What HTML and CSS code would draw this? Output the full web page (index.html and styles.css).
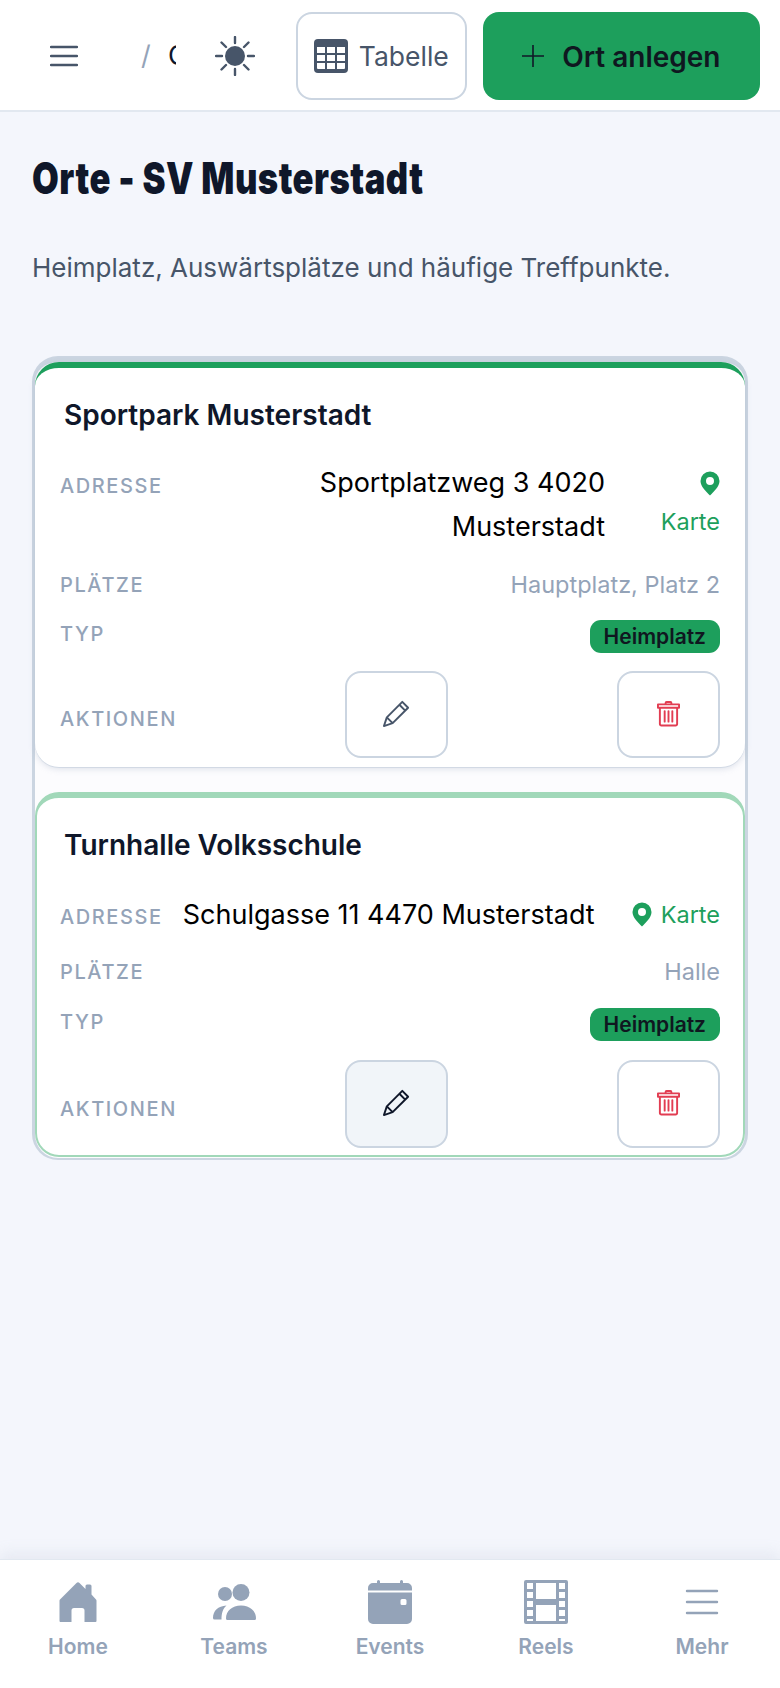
FILE: index.html
```html
<!DOCTYPE html>
<html lang="de">
<head>
<meta charset="utf-8">
<title>Orte - SV Musterstadt</title>
<link rel="stylesheet" href="styles.css">
</head>
<body>
<header class="topbar">
  <button class="menu-btn" aria-label="Menü">
    <svg class="menu-icon" viewBox="0 0 28 22"><path d="M1 2h26M1 11h26M1 20h26"/></svg>
  </button>
  <div class="crumbs"><span class="slash">/</span><span class="crumb-clip"><span class="crumb">Orte</span></span></div>
  <button class="theme-btn" aria-label="Design">
    <svg class="sun" viewBox="0 0 40 40"><circle cx="20" cy="20" r="10"/><path d="M20 1v6M20 33v6M1 20h6M33 20h6M6.500 6.500l4.500 4.500M29 29l4.500 4.500M6.500 33.500l4.500-4.500M29 11l4.500-4.500"/></svg>
  </button>
  <button class="table-btn">
    <svg class="table-icon" viewBox="0 0 34 34"><path class="tfill" d="M4 0h26a4 4 0 0 1 4 4v26a4 4 0 0 1-4 4H4a4 4 0 0 1-4-4V4a4 4 0 0 1 4-4z"/><path class="tcell" d="M3 8h8v6H3zM13 8h8v6h-8zM23 8h8v6h-8zM3 16h8v6H3zM13 16h8v6h-8zM23 16h8v6h-8zM3 24h8v6H4a1 1 0 0 1-1-1zM13 24h8v6h-8zM23 24h8v5a1 1 0 0 1-1 1h-7z"/></svg>
    <span>Tabelle</span>
  </button>
  <button class="add-btn">
    <svg class="plus" viewBox="0 0 22 22"><path d="M11 0v22M0 11h22"/></svg>
    <span>Ort anlegen</span>
  </button>
</header>

<main class="page">
  <h1 class="title">Orte - SV Musterstadt</h1>
  <p class="subtitle">Heimplatz, Auswärtsplätze und häufige Treffpunkte.</p>

  <section class="list">
    <article class="card card-first">
      <h2 class="card-title">Sportpark Musterstadt</h2>
      <div class="row row-address">
        <span class="label">Adresse</span>
        <span class="address address-wrap">Sportplatzweg 3 4020 Musterstadt</span>
        <a class="map map-stack">
          <svg class="pin" viewBox="0 0 20 24"><path fill-rule="evenodd" d="M10 0a9.500 9.500 0 0 1 9.500 9.500c0 5.500-5.500 10.500-9.500 14.500C6 20 .5 15 .5 9.500A9.500 9.500 0 0 1 10 0zm0 5.500a4 4 0 1 0 0 8 4 4 0 0 0 0-8z"/></svg>
          <span>Karte</span>
        </a>
      </div>
      <div class="row row-places"><span class="label">Plätze</span><span class="places">Hauptplatz, Platz 2</span></div>
      <div class="row row-type"><span class="label">Typ</span><span class="badge">Heimplatz</span></div>
      <div class="row row-actions">
        <span class="label">Aktionen</span>
        <button class="icon-btn edit-btn" aria-label="Bearbeiten">
          <svg class="pencil" viewBox="0 0 30 30"><path d="M2 28l3-9L21 3l6 6-16 16zM5 19l6 6M18 6l6 6"/></svg>
        </button>
        <button class="icon-btn" aria-label="Löschen">
          <svg class="trash" viewBox="0 0 24 28"><path d="M1 4.500h22v3.500H1zM9 4.500V3a1 1 0 0 1 1-1h4a1 1 0 0 1 1 1v1.500M3 8v17a1.500 1.500 0 0 0 1.500 1.500h15A1.500 1.500 0 0 0 21 25V8M8 11.500v11M12 11.500v11M16 11.500v11"/></svg>
        </button>
      </div>
    </article>

    <article class="card card-second">
      <h2 class="card-title">Turnhalle Volksschule</h2>
      <div class="row row-address row-address-line">
        <span class="label">Adresse</span>
        <span class="address">Schulgasse 11 4470 Musterstadt</span>
        <a class="map">
          <svg class="pin" viewBox="0 0 20 24"><path fill-rule="evenodd" d="M10 0a9.500 9.500 0 0 1 9.500 9.500c0 5.500-5.500 10.500-9.500 14.500C6 20 .5 15 .5 9.500A9.500 9.500 0 0 1 10 0zm0 5.500a4 4 0 1 0 0 8 4 4 0 0 0 0-8z"/></svg>
          <span>Karte</span>
        </a>
      </div>
      <div class="row row-places"><span class="label">Plätze</span><span class="places">Halle</span></div>
      <div class="row row-type"><span class="label">Typ</span><span class="badge">Heimplatz</span></div>
      <div class="row row-actions">
        <span class="label">Aktionen</span>
        <button class="icon-btn edit-btn is-hover" aria-label="Bearbeiten">
          <svg class="pencil" viewBox="0 0 30 30"><path d="M2 28l3-9L21 3l6 6-16 16zM5 19l6 6M18 6l6 6"/></svg>
        </button>
        <button class="icon-btn" aria-label="Löschen">
          <svg class="trash" viewBox="0 0 24 28"><path d="M1 4.500h22v3.500H1zM9 4.500V3a1 1 0 0 1 1-1h4a1 1 0 0 1 1 1v1.500M3 8v17a1.500 1.500 0 0 0 1.500 1.500h15A1.500 1.500 0 0 0 21 25V8M8 11.500v11M12 11.500v11M16 11.500v11"/></svg>
        </button>
      </div>
    </article>
  </section>
</main>

<nav class="bottom-nav">
  <a class="nav-item">
    <svg class="nav-icon" viewBox="0 0 44 44"><path d="M20.500 3L4 19.500a2 2 0 0 0-.5 1.300V41a1 1 0 0 0 1 1h11V30.500a2.500 2.500 0 0 1 2.500-2.500h8a2.500 2.500 0 0 1 2.500 2.500V42h11a1 1 0 0 0 1-1V20.800a2 2 0 0 0-.5-1.300L35.500 14.500V6a1.500 1.500 0 0 0-1.500-1.500h-3A1.500 1.500 0 0 0 29.500 6v3L23.500 3a2 2 0 0 0-3 0z"/></svg>
    <span>Home</span>
  </a>
  <a class="nav-item">
    <svg class="nav-icon" viewBox="0 0 44 44"><circle cx="13" cy="14" r="7"/><circle cx="29" cy="12.500" r="8.500"/><path d="M1 38c0-7 5-12 13.500-12.500C11 28.500 9.500 33 9.500 39.500H2.500A1.500 1.500 0 0 1 1 38zM14 38.500C14 31 20 25.500 29 25.500S44 31 44 38.500a1.500 1.500 0 0 1-1.500 1.500h-27a1.500 1.500 0 0 1-1.500-1.500z"/></svg>
    <span>Teams</span>
  </a>
  <a class="nav-item">
    <svg class="nav-icon" viewBox="0 0 44 44"><path fill-rule="evenodd" d="M9 1.500a1.500 1.500 0 0 1 3 0V3h20V1.500a1.500 1.500 0 0 1 3 0V3h4a5 5 0 0 1 5 5v2.500H0V8a5 5 0 0 1 5-5h4zM0 12.500h44V39a5 5 0 0 1-5 5H5a5 5 0 0 1-5-5zM34 19a1.500 1.500 0 0 0-1.500 1.500v3A1.500 1.500 0 0 0 34 25h3a1.500 1.500 0 0 0 1.500-1.500v-3A1.500 1.500 0 0 0 37 19z"/></svg>
    <span>Events</span>
  </a>
  <a class="nav-item">
    <svg class="nav-icon" viewBox="0 0 44 44"><path fill-rule="evenodd" d="M2 0h40a2 2 0 0 1 2 2v40a2 2 0 0 1-2 2H2a2 2 0 0 1-2-2V2a2 2 0 0 1 2-2zm1 3v6h6V3zm0 9v6h6v-6zm0 9v6h6v-6zm0 9v6h6v-6zm0 9v2h6v-2zM12 3v16h20V3zm23 0v6h6V3zm0 9v6h6v-6zm0 9v6h6v-6zm0 9v6h6v-6zm0 9v2h6v-2zM12 25v16h20V25z"/></svg>
    <span>Reels</span>
  </a>
  <a class="nav-item">
    <svg class="nav-icon nav-lines" viewBox="0 0 44 44"><path d="M7 11h30M7 22h30M7 33h30"/></svg>
    <span>Mehr</span>
  </a>
</nav>
</body>
</html>
```

FILE: styles.css
```css
* { box-sizing: border-box; }
html, body { margin: 0; height: 100%; }
body {
  display: flex;
  flex-direction: column;
  height: 1688px;
  overflow: hidden;
  background: #f4f6fc;
  color: #0f172a;
  font-family: "Inter", "Noto Sans", sans-serif;
}
button { font: inherit; background: none; border: 0; padding: 0; color: inherit; }

.topbar {
  flex: none;
  height: 112px;
  display: flex;
  align-items: center;
  background: #fff;
  border-bottom: 2px solid #e2e8f0;
  padding: 1px 20px 0 50px;
}
.menu-btn { width: 28px; height: 22px; display: flex; }
.menu-icon { width: 28px; height: 22px; fill: none; stroke: #475569; stroke-width: 2.4; stroke-linecap: round; }
.crumbs { display: flex; align-items: center; margin-left: 63px; width: 35px; font-size: 27px; }
.slash { color: #94a3b8; width: 27px; }
.crumb-clip { width: 8px; overflow: hidden; display: block; }
.crumb { color: #0f172a; }
.theme-btn { width: 40px; height: 40px; margin-left: 39px; display: flex; }
.sun { width: 40px; height: 40px; }
.sun circle { fill: #475569; }
.sun path { fill: none; stroke: #475569; stroke-width: 2.4; stroke-linecap: round; }
.table-btn {
  margin-left: 41px;
  width: 171px;
  height: 88px;
  display: flex;
  align-items: center;
  justify-content: center;
  gap: 11px;
  border: 2px solid #cbd5e1;
  border-radius: 16px;
  color: #475569;
  font-size: 26.500px;
  white-space: nowrap;
}
.table-icon { width: 34px; height: 34px; flex: none; }
.tfill { fill: #475569; }
.tcell { fill: #fff; }
.add-btn {
  margin-left: 16px;
  width: 278px;
  height: 88px;
  display: flex;
  align-items: center;
  justify-content: center;
  gap: 18px;
  background: #1d9f5c;
  border-radius: 16px;
  color: #0f1720;
  font-size: 28px;
  font-weight: 600;
  white-space: nowrap;
}
.add-btn span { margin-top: 2px; }
.plus { width: 22px; height: 22px; fill: none; stroke: #111827; stroke-width: 1.6; }

.page { flex: 1; padding: 0 32px; min-height: 0; }
.title {
  margin: 40px 0 0;
  height: 52px;
  font-weight: 900;
  font-size: 44px;
  line-height: 52px;
  color: #0f172a;
  white-space: nowrap;
  transform: scaleX(.786);
  transform-origin: left center;
  letter-spacing: .6px;
}
.subtitle {
  margin: 46px 0 0;
  font-size: 26px;
  line-height: 36px;
  color: #475569;
}

.list {
  margin-top: 70px;
  height: 804px;
  border: solid #cbd5e1;
  border-width: 6px 3px 2px;
  border-radius: 26px;
  display: flex;
  flex-direction: column;
  gap: 25px;
  background: #fcfcfe;
}
.card { background: #fff; border-radius: 24px; padding: 0 25px; flex: none; }
.card-first {
  height: 405px;
  border-top: 6px solid #1d9f5c;
  box-shadow: 0 2px 6px rgba(148,163,184,.3), 0 1px 0 #e2e8f0;
}
.card-second { height: 365px; border: 2px solid #a1d8b9; border-top-width: 6px; padding: 0 23px; }

.card-title {
  margin: 0;
  padding: 28px 0 0 4px;
  font-size: 28px;
  line-height: 38px;
  font-weight: 600;
  color: #0f172a;
}
.row { display: flex; justify-content: space-between; align-items: center; }
.label {
  color: #94a3b8;
  font-size: 20px;
  font-weight: 500;
  letter-spacing: 1.6px;
  text-transform: uppercase;
  flex: none;
}
.row-address { margin-top: 29px; align-items: flex-start; }
.row-address .label { margin-top: 11px; }
.address { color: #000; font-size: 27px; line-height: 44px; text-align: right; margin-top: -2px; }
.address-wrap { width: 300px; margin-left: auto; }
.map { display: flex; align-items: center; gap: 9px; color: #1d9f5c; font-size: 23.500px; }
.pin { width: 20px; height: 25px; fill: #1d9f5c; flex: none; }
.map-stack {
  flex-direction: column;
  align-items: flex-end;
  gap: 11px;
  margin-left: 57px;
  padding-top: 8px;
  width: 58px;
}
.row-address-line { margin-top: 29px; align-items: center; gap: 20px; }
.row-address-line .label { margin-top: 4px; }
.row-address-line .address { flex: 1; text-align: left; white-space: nowrap; margin-top: 0; line-height: 43px; }
.row-address-line .map { flex: none; }

.row-places { margin-top: 18px; }
.places { color: #94a3b8; font-size: 23.500px; line-height: 36px; }
.row-type { margin-top: 17px; }
.card-second .row-type { margin-top: 18px; }
.row-type .label { margin-bottom: 5px; }
.badge {
  background: #1d9f5c;
  color: #0f1720;
  font-size: 21px;
  font-weight: 600;
  line-height: 33px;
  height: 33px;
  padding: 0 14px;
  border-radius: 11px;
}
.row-actions { margin-top: 18px; justify-content: flex-start; }
.card-second .row-actions { margin-top: 19px; }
.row-actions .label { margin-right: 168px; margin-top: 9px; }
.icon-btn {
  width: 103px;
  height: 87px;
  border: 2px solid #cbd5e1;
  border-radius: 16px;
  background: #fff;
  display: flex;
  align-items: center;
  justify-content: center;
  flex: none;
  padding-bottom: 3px;
}
.card-second .icon-btn { height: 88px; }
.icon-btn + .icon-btn { margin-left: auto; }
.is-hover { background: #f1f5f9; }
.pencil { width: 29px; height: 29px; fill: none; stroke: #475569; stroke-width: 2; stroke-linejoin: round; }
.is-hover .pencil { stroke: #0f172a; }
.trash { width: 23px; height: 27px; fill: none; stroke: #e23d52; stroke-width: 2; stroke-linejoin: round; stroke-linecap: round; }

.bottom-nav {
  flex: none;
  height: 129px;
  display: flex;
  background: #fff;
  border-top: 1px solid #e2e8f0;
  box-shadow: 0 -6px 14px rgba(148,163,184,.14);
  padding: 20px 0 0 0;
}
.nav-item {
  flex: 1;
  display: flex;
  flex-direction: column;
  align-items: center;
  color: #94a3b8;
  font-size: 21px;
  font-weight: 600;
  line-height: 28px;
}
.nav-item span { margin-top: 9px; }
.nav-icon { width: 44px; height: 44px; fill: #94a3b8; display: block; }
.nav-lines { fill: none; stroke: #94a3b8; stroke-width: 2.4; stroke-linecap: round; }
```
